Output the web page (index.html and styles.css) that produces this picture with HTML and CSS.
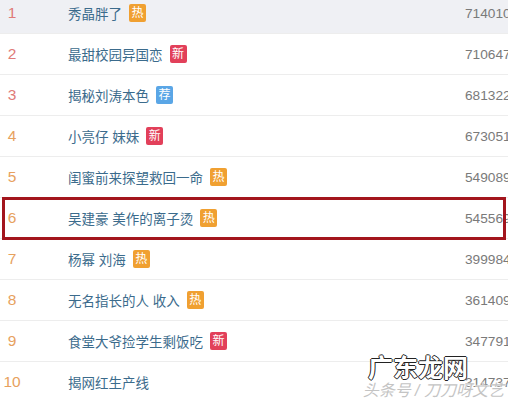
FILE: index.html
```html
<!DOCTYPE html>
<html lang="zh-CN">
<head>
    <meta charset="UTF-8">
    <title>热搜榜</title>
    <link rel="stylesheet" href="styles.css">
</head>
<body>
    <div class="board">
        <ul class="list">
            <li class="row first">
                <span class="rank top">1</span>
                <span class="title">秀晶胖了<i class="tag hot">热</i></span>
                <span class="count">714010</span>
            </li>
            <li class="row">
                <span class="rank top">2</span>
                <span class="title">最甜校园异国恋<i class="tag new">新</i></span>
                <span class="count">710647</span>
            </li>
            <li class="row">
                <span class="rank top">3</span>
                <span class="title">揭秘刘涛本色<i class="tag rec">荐</i></span>
                <span class="count">681322</span>
            </li>
            <li class="row">
                <span class="rank">4</span>
                <span class="title">小亮仔 妹妹<i class="tag new">新</i></span>
                <span class="count">673051</span>
            </li>
            <li class="row">
                <span class="rank">5</span>
                <span class="title">闺蜜前来探望救回一命<i class="tag hot">热</i></span>
                <span class="count">549089</span>
            </li>
            <li class="row marked">
                <span class="rank">6</span>
                <span class="title">吴建豪 美作的离子烫<i class="tag hot">热</i></span>
                <span class="count">545569</span>
            </li>
            <li class="row">
                <span class="rank">7</span>
                <span class="title">杨幂 刘海<i class="tag hot">热</i></span>
                <span class="count">399984</span>
            </li>
            <li class="row">
                <span class="rank">8</span>
                <span class="title">无名指长的人 收入<i class="tag hot">热</i></span>
                <span class="count">361409</span>
            </li>
            <li class="row">
                <span class="rank">9</span>
                <span class="title">食堂大爷捡学生剩饭吃<i class="tag new">新</i></span>
                <span class="count">347791</span>
            </li>
            <li class="row">
                <span class="rank">10</span>
                <span class="title">揭网红生产线</span>
                <span class="count">314737</span>
            </li>
        </ul>

        <!-- watermark -->
        <div class="watermark">
            <div class="wm-site">广东龙网</div>
            <div class="wm-sub">头条号 / 刀刀呀文艺</div>
        </div>
    </div>
</body>
</html>
```

FILE: styles.css
```css
body {
    margin: 0;
    padding: 0;
    background-color: #fff;
    font-family: "Liberation Sans", Arial, "Noto Sans CJK SC", sans-serif;
    overflow: hidden;
}

.board {
    position: relative;
    width: 508px;
    height: 400px;
    overflow: hidden;
}

.list {
    list-style: none;
    margin: -7px 0 0;
    padding: 0;
}

.row {
    position: relative;
    display: flex;
    align-items: center;
    height: 40px;
    border-bottom: 1px solid #ededed;
}

.row.first {
    background-color: #eff0f4;
}

.row.marked::after {
    content: "";
    position: absolute;
    left: 2px;
    top: -1px;
    width: 498px;
    height: 37px;
    border: 3px solid #a3151d;
}

.rank {
    width: 24px;
    flex-shrink: 0;
    text-align: center;
    font-size: 15.5px;
    color: #e7a15e;
}

.rank.top {
    color: #e07b78;
}

.title {
    display: flex;
    align-items: center;
    margin-left: 44px;
    width: 397px;
    flex-shrink: 0;
    font-size: 13.5px;
    color: #3b6b8c;
}

.tag {
    display: inline-block;
    width: 17px;
    height: 18px;
    margin-left: 7px;
    border-radius: 2px;
    font-style: normal;
    font-size: 12px;
    line-height: 18px;
    text-align: center;
    color: #fff;
}

.tag.hot {
    background-color: #f0a031;
}

.tag.new {
    background-color: #e2405a;
}

.tag.rec {
    background-color: #5aa6e6;
}

.count {
    flex-shrink: 0;
    white-space: nowrap;
    font-size: 13.7px;
    color: #7a7a7a;
}

.watermark {
    position: absolute;
    left: 330px;
    top: 355px;
    width: 178px;
    text-align: right;
}

.wm-site {
    margin-right: 40px;
    font-size: 25px;
    font-weight: bold;
    line-height: 26px;
    color: #fff;
    text-shadow:
        1px 0 0 #222, -1px 0 0 #222,
        0 1px 0 #222, 0 -1px 0 #222;
}

.wm-sub {
    margin-right: 4px;
    font-size: 16px;
    line-height: 20px;
    font-style: italic;
    color: #c4c4c4;
    text-shadow: 0 0 2px #fff, 0 0 1px #fff;
}
```
